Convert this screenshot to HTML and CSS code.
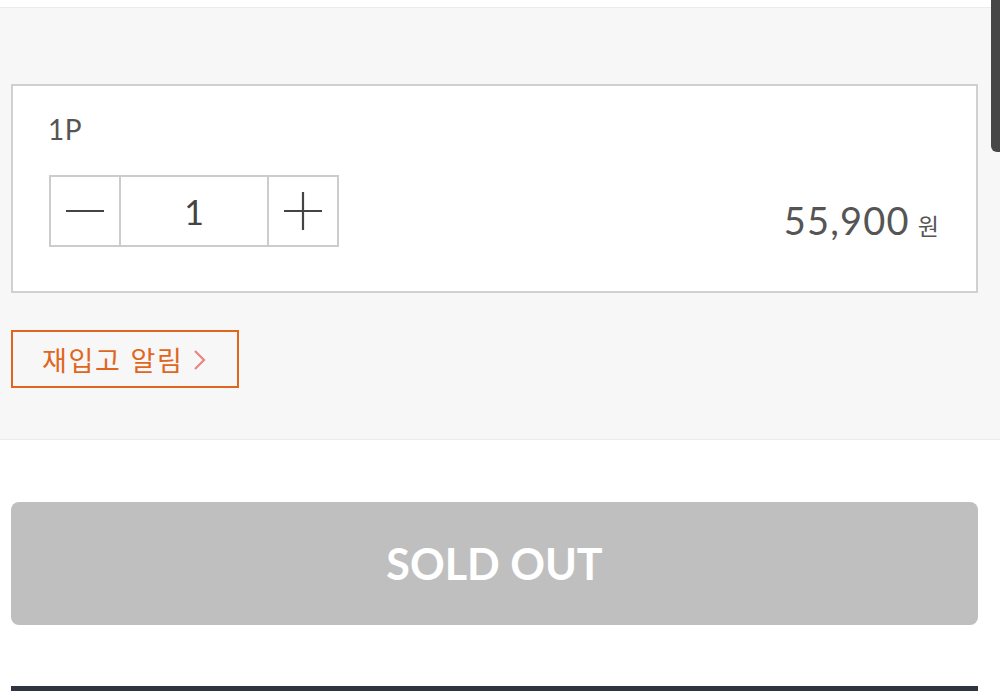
FILE: index.html
```html
<!DOCTYPE html>
<html lang="ko">
<head>
<meta charset="utf-8">
<link rel="stylesheet" href="styles.css">
</head>
<body>
<div class="scrollbar"></div>
<div class="topstrip"></div>
<section class="panel">
  <div class="option">
    <div class="opt-name">1P</div>
    <div class="opt-row">
      <div class="stepper">
        <button class="step minus" aria-label="minus">
          <svg width="40" height="40" viewBox="0 0 40 40"><path d="M1 20H39" stroke="#444" stroke-width="2.2"/></svg>
        </button>
        <div class="qty">1</div>
        <button class="step plus" aria-label="plus">
          <svg width="40" height="40" viewBox="0 0 40 40"><path d="M1 20H39M20 1V39" stroke="#444" stroke-width="2.2"/></svg>
        </button>
      </div>
      <div class="price"><span class="num">55,900</span><span class="won">원</span></div>
    </div>
  </div>
  <button class="restock">재입고 알림<svg class="chev" width="14" height="22" viewBox="0 0 14 22"><path d="M2 2L11 11L2 20" fill="none" stroke="#e8857f" stroke-width="2.2"/></svg></button>
</section>
<div class="buy">
  <button class="soldout">SOLD OUT</button>
  <div class="rule"></div>
</div>
</body>
</html>
```
FILE: styles.css
```css
html, body {
  margin: 0;
  padding: 0;
  background: #fff;
  font-family: "Lato", "Noto Sans CJK KR", sans-serif;
  color: #555;
}
.scrollbar {
  position: absolute;
  top: 0;
  right: 0;
  width: 9px;
  height: 152px;
  background: #474747;
  border-bottom-left-radius: 6px;
}
.topstrip {
  height: 7px;
  border-bottom: 1px solid #ececec;
}
.panel {
  background: #f7f7f7;
  padding: 76px 22px 51px 11px;
  border-bottom: 1px solid #ececec;
}
.option {
  background: #fff;
  border: 2px solid #d0d0d0;
  box-sizing: border-box;
  height: 209px;
  padding: 27px 37px 0 35px;
}
.opt-name {
  font-size: 28px;
  line-height: 32px;
  color: #555;
  letter-spacing: 0.5px;
}
.opt-row {
  margin-top: 30px;
  display: flex;
  justify-content: space-between;
  align-items: flex-end;
}
.stepper {
  display: flex;
  border: 2px solid #cccccc;
  height: 72px;
  box-sizing: border-box;
  margin-left: 1px;
}
.step {
  width: 68px;
  border: 0;
  padding: 0;
  background: #fff;
  display: flex;
  align-items: center;
  justify-content: center;
}
.qty {
  width: 146px;
  border-left: 2px solid #cccccc;
  border-right: 2px solid #cccccc;
  display: flex;
  align-items: center;
  justify-content: center;
  font-size: 34px;
  color: #444;
}
.price {
  display: flex;
  align-items: baseline;
  padding-bottom: 4px;
}
.num {
  font-size: 38px;
  color: #555;
  letter-spacing: 1.2px;
}
.won {
  font-family: "Noto Sans CJK KR", sans-serif;
  font-size: 23px;
  margin-left: 8px;
  color: #555;
}
.restock {
  margin-top: 37px;
  height: 58px;
  width: 228px;
  box-sizing: border-box;
  border: 2px solid #e0661e;
  background: transparent;
  color: #e0661e;
  font-family: "Noto Sans CJK KR", sans-serif;
  font-size: 27px;
  padding: 0 0 0 29px;
  display: flex;
  align-items: center;
  letter-spacing: 1.6px;
}
.chev {
  margin-left: 10px;
  margin-top: 2px;
}
.buy {
  padding: 62px 22px 0 11px;
}
.soldout {
  display: block;
  width: 100%;
  height: 123px;
  border: 0;
  border-radius: 8px;
  background: #bfbfbf;
  color: #fff;
  font-family: "Lato", sans-serif;
  font-weight: 700;
  font-size: 43px;
}
.rule {
  margin-top: 61px;
  height: 5px;
  background: #2f3540;
}
```
